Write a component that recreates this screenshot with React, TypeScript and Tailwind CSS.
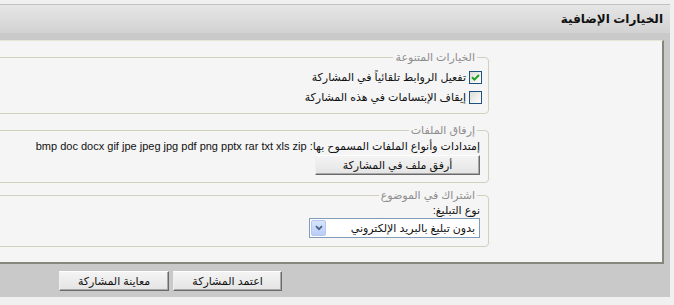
import React from "react";

function CheckBox({ checked }: { checked?: boolean }) {
  return (
    <span className="w-[13px] h-[13px] shrink-0 border border-[#1c5180] bg-linear-to-br from-[#dcdcd7] to-[#ffffff] flex items-center justify-center">
      {checked && (
        <svg width="9" height="9" viewBox="0 0 9 9">
          <path d="M1 4.2 L3.4 6.6 L8 2" fill="none" stroke="#21a121" strokeWidth="2" />
        </svg>
      )}
    </span>
  );
}

function XpButton({ children, w }: { children: React.ReactNode; w: string }) {
  return (
    <div
      className={`${w} h-[20px] flex items-center justify-center text-[11px] text-[#111] bg-linear-to-b from-[#f4f4f4] to-[#e4e4e4] border border-t-white border-l-[#f0f0f0] border-r-[#6a6a6a] border-b-[#6a6a6a] shadow-[inset_-1px_-1px_0_#a8a8a8]`}
    >
      {children}
    </div>
  );
}

export default function App() {
  return (
    <div
      dir="rtl"
      className="w-[674px] h-[305px] overflow-hidden bg-[#f0f0f0] pt-[4px] [font-family:'Liberation_Sans','DejaVu_Sans',sans-serif]"
    >
      {/* header */}
      <div className="mr-[4px] h-[29px] border-t border-[#c2c2c2] bg-linear-to-b from-[#e6e6e6] via-[#dcdcdc] to-[#d2d2d2] flex items-center pr-[7px]">
        <span className="text-[12px] font-bold text-[#111]">الخيارات الإضافية</span>
      </div>

      {/* gray body */}
      <div className="mr-[4px] bg-[#c9c9c9] pt-[7px] pr-[6px] h-[264px]">
        <div className="h-[224px] bg-[#f5f5f5] border-t border-t-[#e6e6d6] border-r-2 border-b-2 border-r-[#86867c] border-b-[#86867c] overflow-hidden pt-[10px]">
          {/* fieldset 1 */}
          <fieldset className="border border-[#d0d0bf] rounded-[4px] mr-[173px] -ml-[10px] pr-[6px] pt-[3px] pb-[6px]">
            <legend className="text-[11px] leading-[13px] text-[#8e8e8e] px-[2px] mr-[5px]">الخيارات المتنوعة</legend>
            <div className="h-[20px] flex items-center gap-[3px] text-[11px] text-[#111]">
              <CheckBox checked />
              <span>تفعيل الروابط تلقائياً في المشاركة</span>
            </div>
            <div className="h-[20px] flex items-center gap-[3px] text-[11px] text-[#111]">
              <CheckBox />
              <span>إيقاف الإبتسامات في هذه المشاركة</span>
            </div>
          </fieldset>

          {/* fieldset 2 */}
          <fieldset className="border border-[#d0d0bf] rounded-[4px] mr-[173px] -ml-[10px] pr-[8px] pt-[2px] pb-[7px] mt-[10px]">
            <legend className="text-[11px] leading-[13px] text-[#8e8e8e] px-[2px] mr-[3px]">إرفاق الملفات</legend>
            <div className="h-[14px] leading-[14px] text-[11px] text-[#111] whitespace-nowrap">
              إمتدادات وأنواع الملفات المسموح بها: <span dir="ltr">bmp doc docx gif jpe jpeg jpg pdf png pptx rar txt xls zip</span>
            </div>
            <div className="mt-[2px] flex">
              <XpButton w="w-[165px]">أرفق ملف في المشاركة</XpButton>
            </div>
          </fieldset>

          {/* fieldset 3 */}
          <fieldset className="border border-[#d0d0bf] rounded-[4px] mr-[173px] -ml-[10px] pr-[8px] pt-[2px] pb-[8px] mt-[6px]">
            <legend className="text-[11px] leading-[13px] text-[#8e8e8e] px-[2px] mr-[3px]">اشتراك في الموضوع</legend>
            <div className="h-[13px] leading-[13px] text-[11px] text-[#111]">نوع التبليغ:</div>
            <div className="mt-[1px] w-[171px] h-[20px] border border-[#7f9db9] bg-white flex items-center justify-between pr-[4px] pl-[1px]">
              <span className="text-[11px] text-[#111]">بدون تبليغ بالبريد الإلكتروني</span>
              <span className="w-[15px] h-[16px] rounded-[2px] border border-[#b6c8f0] bg-linear-to-b from-[#d8e4fd] to-[#b9cdf8] flex items-center justify-center">
                <svg width="8" height="6" viewBox="0 0 8 6">
                  <path d="M1 1.2 L4 4.2 L7 1.2" fill="none" stroke="#4d6185" strokeWidth="1.8" />
                </svg>
              </span>
            </div>
          </fieldset>
        </div>

        {/* buttons */}
        <div className="flex gap-[4px] pt-[7px] mr-[382px]">
          <XpButton w="w-[109px]">اعتمد المشاركة</XpButton>
          <XpButton w="w-[110px]">معاينة المشاركة</XpButton>
        </div>
      </div>
    </div>
  );
}
